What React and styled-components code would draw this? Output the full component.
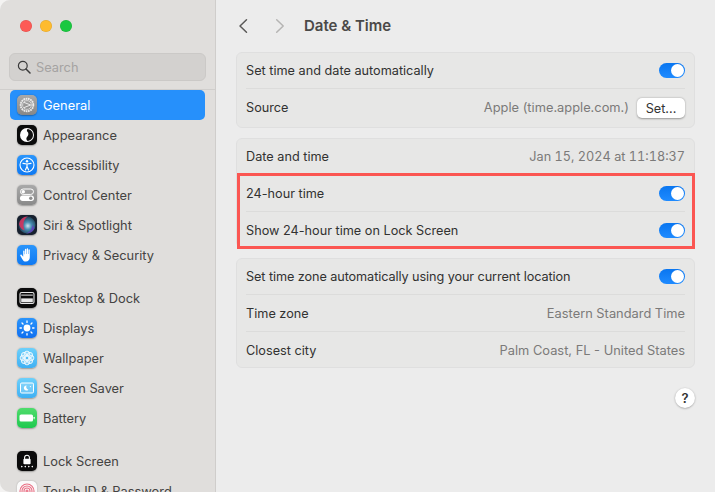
import styled, { createGlobalStyle } from "styled-components";

const GlobalStyle = createGlobalStyle`
  html, body {
    margin: 0;
    padding: 0;
    height: 100%;
    background: #f4f3f2;
    overflow: hidden;
  }
  #root { height: 100%; }
  * { box-sizing: border-box; }
`;

const Window = styled.div`
  display: flex;
  width: 715px;
  height: 492px;
  overflow: hidden;
  border-radius: 10px 0 0 10px;
  font-family: Inter, "Liberation Sans", sans-serif;
  font-size: 12.7px;
  background: #ececec;
`;
const Sidebar = styled.aside`
  flex: 0 0 216px;
  height: 492px;
  overflow: hidden;
  background: #e0dedc;
  border-right: 1px solid #cfcdcb;
`;
const TrafficLights = styled.div`
  display: flex;
  gap: 8px;
  padding: 20px 0 0 20px;
  height: 53px;
`;
const Light = styled.span`
  width: 12px;
  height: 12px;
  border-radius: 50%;
  background: ${(p) => p.$color};
  box-shadow: inset 0 0 0 0.5px rgba(0, 0, 0, 0.12);
`;
const SearchBox = styled.div`
  display: flex;
  align-items: center;
  gap: 5px;
  margin-left: 9px;
  width: 197px;
  height: 28px;
  padding-left: 7px;
  border: 1px solid #cbc9c7;
  border-radius: 6px;
  background: #d3d1cf;
  color: #a5a3a2;
  font-size: 12.8px;
`;
const Divider = styled.div`
  height: 1px;
  margin-top: 8px;
  background: #d0cecc;
`;
const NavList = styled.nav`
  display: flex;
  flex-direction: column;
  padding: 0 10px;
`;
const NavGroup = styled.div`
  display: flex;
  flex-direction: column;
  margin-bottom: 13px;
`;
const NavItem = styled.div`
  display: flex;
  align-items: center;
  flex: 0 0 30px;
  gap: 6px;
  padding-left: 7px;
  border-radius: 5px;
  background: ${(p) => (p.$active ? "#2690fb" : "transparent")};
  color: ${(p) => (p.$active ? "#ffffff" : "#444342")};
  font-size: 12.85px;
  white-space: nowrap;
`;
const IconTile = styled.span`
  display: flex;
  align-items: center;
  justify-content: center;
  flex: 0 0 20px;
  height: 20px;
  border-radius: 5px;
  background: ${(p) => p.$bg};
  box-shadow: 0 0.5px 1.5px rgba(0, 0, 0, 0.3);
  overflow: hidden;
`;
const Main = styled.main`
  flex: 1;
  padding: 0 20px;
  background: #ececec;
`;
const TitleBar = styled.header`
  display: flex;
  align-items: center;
  height: 52px;
`;
const NavArrows = styled.div`
  display: flex;
  align-items: center;
  gap: 25px;
  padding-left: 1px;
  margin-right: 18px;
`;
const Title = styled.h1`
  margin: 0 0 1px;
  font-size: 15px;
  font-weight: 600;
  color: #4a4948;
`;
const Card = styled.section`
  margin-bottom: 10px;
  border: 1px solid #dfdfdf;
  border-radius: 6px;
  background: #e7e7e6;
`;
const Row = styled.div`
  display: flex;
  align-items: center;
  justify-content: space-between;
  height: 37px;
  margin: 0 9px;
  padding-top: 1px;
  color: #323231;
  letter-spacing: ${(p) => (p.$tight ? "-0.09px" : "normal")};
  border-bottom: 1px solid #dcdcdb;
  &:first-child {
    height: 36px;
    padding-top: 0;
  }
  &:last-child {
    height: 35px;
    padding-top: 2px;
    border-bottom: none;
  }
`;
const SourceRow = styled(Row)`
  &:last-child {
    height: 38px;
    padding: 0 0 1px;
  }
`;
const RowValue = styled.span`
  color: #7b7a79;
  font-size: 12.85px;
  letter-spacing: 0;
`;
const DateValue = styled(RowValue)`
  font-size: 12.7px;
  font-variant-numeric: tabular-nums;
`;
const SourceGroup = styled.div`
  display: flex;
  align-items: center;
  gap: 8px;
`;
const SetButton = styled.button`
  width: 48px;
  height: 20px;
  margin-top: 1px;
  padding: 0;
  border: none;
  border-radius: 5px;
  background: #ffffff;
  box-shadow: 0 0.5px 2px rgba(0, 0, 0, 0.35);
  color: #333;
  font: inherit;
`;
const Toggle = styled.span`
  display: flex;
  justify-content: flex-end;
  align-items: center;
  width: 26px;
  height: 15px;
  padding: 1px;
  border-radius: 8px;
  background: linear-gradient(#0a76f0, #1f8bff);
`;
const Knob = styled.span`
  width: 13px;
  height: 13px;
  border-radius: 50%;
  background: #ffffff;
`;
const Highlighted = styled.div`
  position: relative;
  &::after {
    content: "";
    position: absolute;
    inset: -2px -1px -2px 0;
    border: 3px solid #fb5652;
    pointer-events: none;
  }
  & > ${Row}:first-child {
    height: 37px;
    padding-top: 1px;
  }
`;
const HelpRow = styled.div`
  display: flex;
  justify-content: flex-end;
  padding-top: 10px;
`;
const HelpButton = styled.button`
  width: 20px;
  height: 20px;
  padding: 0;
  border: none;
  border-radius: 50%;
  background: #ffffff;
  box-shadow: 0 0.5px 2px rgba(0, 0, 0, 0.35);
  color: #333;
  font: 600 13px Inter, sans-serif;
`;

const GeneralIcon = () => (
  <svg width="20" height="20" viewBox="0 0 20 20" fill="none" stroke="#ececec">
    <circle cx="10" cy="10" r="6.3" strokeWidth="1.9" strokeDasharray="1.7 0.6" />
    <circle cx="10" cy="10" r="4.4" strokeWidth="0.7" />
    <path d="M7 7.4 13.6 10 7 12.6" strokeWidth="1" strokeLinejoin="round" />
  </svg>
);
const AppearanceIcon = () => (
  <svg width="20" height="20" viewBox="0 0 20 20">
    <circle cx="10" cy="10" r="7" fill="#fff" />
    <path d="M10.6 4c3.2.3 5.4 3 5.4 6s-2.2 5.7-5.4 6c-1.6-1.2-1.6-3-.4-4.2 1.5-1.5 1.6-3.7.3-5-.8-.8-.8-1.8.1-2.8z" fill="#111" />
  </svg>
);
const AccessibilityIcon = () => (
  <svg width="20" height="20" viewBox="0 0 20 20" fill="none" stroke="#fff">
    <circle cx="10" cy="10" r="7" strokeWidth="1.1" />
    <circle cx="10" cy="6.3" r="1.2" fill="#fff" stroke="none" />
    <path d="M6 8.3 10 9l4-.7M10 9v2.6M10 11.6 8.4 15M10 11.6l1.6 3.4" strokeWidth="1.2" strokeLinecap="round" />
  </svg>
);
const ControlCenterIcon = () => (
  <svg width="20" height="20" viewBox="0 0 20 20">
    <rect x="3.5" y="4" width="13" height="5.4" rx="2.7" fill="none" stroke="#fff" strokeWidth="1" />
    <circle cx="6.3" cy="6.7" r="1.7" fill="#fff" />
    <rect x="3" y="10.6" width="14" height="5.4" rx="2.7" fill="#fff" />
    <circle cx="13.8" cy="13.3" r="1.7" fill="#8d8d8d" />
  </svg>
);
const SiriIcon = () => (
  <svg width="20" height="20" viewBox="0 0 20 20">
    <defs>
      <radialGradient id="siriGlow" cx="55%" cy="55%" r="55%">
        <stop offset="0" stopColor="#cfe3ee" />
        <stop offset="0.4" stopColor="#4a8fb4" />
        <stop offset="1" stopColor="#1c3a4e" />
      </radialGradient>
    </defs>
    <circle cx="10" cy="10" r="8.5" fill="url(#siriGlow)" />
    <path d="M2 9a8.5 8.5 0 0 1 9-7.4C7.5 3.500 5 7.500 7.500 15.500A8.500 8.500 0 0 1 2 9z" fill="#d5345f" opacity="0.9" />
    <path d="M17.600 13a8.500 8.500 0 0 1-8.600 5.400c3.400-1.200 6-3.400 6.200-8.400z" fill="#6a3cc4" opacity="0.75" />
  </svg>
);
const HandIcon = () => (
  <svg width="20" height="20" viewBox="0 0 20 20" fill="#fff">
    <path d="M6.2 6.2c0-1 1.3-1 1.3 0v3h.4V4.400c0-1 1.400-1 1.400 0V9h.4V3.900c0-1 1.400-1 1.400 0V9h.4V5c0-1 1.300-1 1.300 0v7.200c0 2.600-1.600 4.300-3.900 4.300-1.900 0-2.900-1-3.700-2.600L3.300 10.700c-.4-1 .8-1.600 1.400-.8l1.500 1.900z" />
  </svg>
);
const DockIcon = () => (
  <svg width="20" height="20" viewBox="0 0 20 20">
    <rect x="3" y="4.500" width="14" height="11" rx="1.600" fill="none" stroke="#e8e8e8" strokeWidth="1.100" />
    <rect x="4.200" y="10.400" width="11.600" height="3.900" fill="#e8e8e8" />
    <rect x="4.200" y="6.600" width="11.600" height="1" fill="#e8e8e8" />
  </svg>
);
const DisplaysIcon = () => (
  <svg width="20" height="20" viewBox="0 0 20 20" stroke="#fff" strokeWidth="1.3" strokeLinecap="round">
    <circle cx="10" cy="10" r="3.4" fill="#fff" stroke="none" />
    <path d="M10 3v1.4M10 15.6V17M3 10h1.4M15.6 10H17M5 5l1 1M14 14l1 1M5 15l1-1M14 6l1-1" />
  </svg>
);
const WallpaperIcon = () => (
  <svg width="20" height="20" viewBox="0 0 20 20" fill="rgba(255,255,255,0.25)" stroke="#fff" strokeWidth="0.8">
    <circle cx="10" cy="5.7" r="2.6" />
    <circle cx="10" cy="14.3" r="2.6" />
    <circle cx="5.7" cy="10" r="2.6" />
    <circle cx="14.3" cy="10" r="2.6" />
    <circle cx="7" cy="7" r="2.6" />
    <circle cx="13" cy="7" r="2.6" />
    <circle cx="7" cy="13" r="2.6" />
    <circle cx="13" cy="13" r="2.6" />
  </svg>
);
const ScreenSaverIcon = () => (
  <svg width="20" height="20" viewBox="0 0 20 20">
    <rect x="3.5" y="5" width="13" height="10" rx="1.2" fill="rgba(255,255,255,0.2)" stroke="#fff" strokeWidth="1" />
    <path d="M9.6 7.4a2.6 2.6 0 1 0 1.8 4.3 2.9 2.9 0 0 1-1.8-4.3z" fill="#fff" />
    <circle cx="13.4" cy="8.6" r="0.6" fill="#fff" />
  </svg>
);
const BatteryIcon = () => (
  <svg width="20" height="20" viewBox="0 0 20 20">
    <rect x="2.5" y="6.5" width="13.5" height="7" rx="1.6" fill="#fff" />
    <rect x="16.6" y="8.8" width="1" height="2.4" rx="0.5" fill="#fff" />
  </svg>
);
const LockIcon = () => (
  <svg width="20" height="20" viewBox="0 0 20 20" fill="#fff">
    <path d="M7.6 8V6.6a2.4 2.4 0 0 1 4.8 0V8" fill="none" stroke="#fff" strokeWidth="1.1" />
    <rect x="6.4" y="7.8" width="7.2" height="5.4" rx="0.9" />
    <circle cx="4.8" cy="15.6" r="0.8" />
    <circle cx="8.3" cy="15.6" r="0.8" />
    <circle cx="11.8" cy="15.6" r="0.8" />
    <circle cx="15.3" cy="15.6" r="0.8" />
  </svg>
);
const TouchIdIcon = () => (
  <svg width="20" height="20" viewBox="0 0 20 20" fill="none" stroke="#ea6f84" strokeWidth="1.1">
    <circle cx="10" cy="10" r="7" />
    <circle cx="10" cy="10" r="5" />
    <circle cx="10" cy="10" r="3" />
    <circle cx="10" cy="10" r="1" />
  </svg>
);

const navGroups = [
  [
    { label: "General", bg: "linear-gradient(#a9a9a9, #878787)", Icon: GeneralIcon, active: true },
    { label: "Appearance", bg: "#0b0b0b", Icon: AppearanceIcon },
    { label: "Accessibility", bg: "linear-gradient(#2a95fb, #0f79f2)", Icon: AccessibilityIcon },
    { label: "Control Center", bg: "linear-gradient(#a9a9a9, #8a8a8a)", Icon: ControlCenterIcon },
    { label: "Siri & Spotlight", bg: "#17202e", Icon: SiriIcon },
    { label: "Privacy & Security", bg: "linear-gradient(#2a95fb, #0f79f2)", Icon: HandIcon },
  ],
  [
    { label: "Desktop & Dock", bg: "#0b0b0b", Icon: DockIcon },
    { label: "Displays", bg: "linear-gradient(#2a95fb, #0f6ff0)", Icon: DisplaysIcon },
    { label: "Wallpaper", bg: "linear-gradient(#6cd0fb, #3fb0f3)", Icon: WallpaperIcon },
    { label: "Screen Saver", bg: "linear-gradient(#6cd0fb, #3fb0f3)", Icon: ScreenSaverIcon },
    { label: "Battery", bg: "linear-gradient(#4fdc6c, #1fc94f)", Icon: BatteryIcon },
  ],
  [
    { label: "Lock Screen", bg: "#0b0b0b", Icon: LockIcon },
    { label: "Touch ID & Password", bg: "#fafafa", Icon: TouchIdIcon },
  ],
];

const Switch = () => (
  <Toggle>
    <Knob />
  </Toggle>
);

const App = () => {
  return (
    <Window>
      <GlobalStyle />
      <Sidebar>
        <TrafficLights>
          <Light $color="#fd5a55" />
          <Light $color="#febb2e" />
          <Light $color="#1ac840" />
        </TrafficLights>
        <SearchBox>
          <svg width="14" height="14" viewBox="0 0 14 14" fill="none" stroke="#3a3a3a" strokeWidth="1.2">
            <circle cx="5.8" cy="5.8" r="4.4" />
            <path d="M9 9l4 4" strokeWidth="1.5" strokeLinecap="round" />
          </svg>
          Search
        </SearchBox>
        <Divider />
        <NavList>
          {navGroups.map((group) => (
            <NavGroup key={group[0].label}>
              {group.map(({ label, bg, Icon, active }) => (
                <NavItem key={label} $active={active}>
                  <IconTile $bg={bg}>
                    <Icon />
                  </IconTile>
                  {label}
                </NavItem>
              ))}
            </NavGroup>
          ))}
        </NavList>
      </Sidebar>
      <Main>
        <TitleBar>
          <NavArrows>
            <svg width="12" height="18" viewBox="0 0 12 18" fill="none" stroke="#5a5958" strokeWidth="1.5" strokeLinecap="round" strokeLinejoin="round">
              <path d="M9.5 2.7 3 9l6.5 6.3" />
            </svg>
            <svg width="12" height="18" viewBox="0 0 12 18" fill="none" stroke="#b5b4b3" strokeWidth="1.5" strokeLinecap="round" strokeLinejoin="round">
              <path d="M2.7 2.7 9.2 9l-6.5 6.3" />
            </svg>
          </NavArrows>
          <Title>Date &amp; Time</Title>
        </TitleBar>
        <Card>
          <Row>
            Set time and date automatically
            <Switch />
          </Row>
          <SourceRow>
            Source
            <SourceGroup>
              <RowValue>Apple (time.apple.com.)</RowValue>
              <SetButton>Set...</SetButton>
            </SourceGroup>
          </SourceRow>
        </Card>
        <Card>
          <Row>
            Date and time
            <DateValue>Jan 15, 2024 at 11:18:37</DateValue>
          </Row>
          <Highlighted>
            <Row>
              24-hour time
              <Switch />
            </Row>
            <Row>
              Show 24-hour time on Lock Screen
              <Switch />
            </Row>
          </Highlighted>
        </Card>
        <Card>
          <Row $tight>
            Set time zone automatically using your current location
            <Switch />
          </Row>
          <Row>
            Time zone
            <RowValue>Eastern Standard Time</RowValue>
          </Row>
          <Row>
            Closest city
            <RowValue>Palm Coast, FL - United States</RowValue>
          </Row>
        </Card>
        <HelpRow>
          <HelpButton>?</HelpButton>
        </HelpRow>
      </Main>
    </Window>
  );
};

export default App;
